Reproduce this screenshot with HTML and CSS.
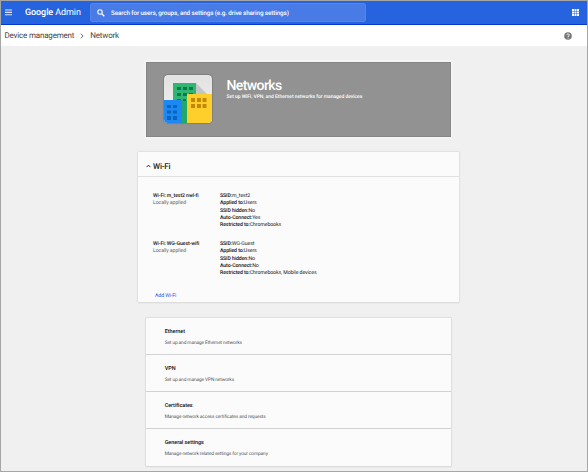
FILE: index.html
```html
<!DOCTYPE html>
<html lang="en">
<head>
<meta charset="utf-8">
<title>Google Admin</title>
<link rel="stylesheet" href="styles.css">
</head>
<body>
<div class="app">
  <header class="topbar">
    <svg class="menu" viewBox="0 0 7 7"><path d="M0 1h7M0 3.4h7M0 5.8h7" stroke="#dfe8fc" stroke-width="1.1"/></svg>
    <div class="brand"><span class="brand-google">Google</span> <span class="brand-admin">Admin</span></div>
    <div class="search">
      <svg class="search-icon" viewBox="0 0 8 8"><circle cx="3" cy="3" r="2.2" fill="none" stroke="#fff" stroke-width="1.1"/><path d="M4.7 4.7L7.3 7.3" stroke="#fff" stroke-width="1.3"/></svg>
      <span class="search-text">Search for users, groups, and settings (e.g. drive sharing settings)</span>
    </div>
    <svg class="apps" viewBox="0 0 7 7"><path fill="#fff" d="M0 0h2v2H0zM2.5 0h2v2h-2zM5 0h2v2H5zM0 2.5h2v2H0zM2.5 2.5h2v2h-2zM5 2.5h2v2H5zM0 5h2v2H0zM2.5 5h2v2h-2zM5 5h2v2H5z"/></svg>
  </header>
  <nav class="crumbs">
    <span class="crumb-parent">Device management</span>
    <svg class="chevron" viewBox="0 0 4 6"><path d="M.8.7L3.1 3 .8 5.3" fill="none" stroke="#555" stroke-width=".9"/></svg>
    <span class="crumb-current">Network</span>
    <svg class="help" viewBox="0 0 8 8"><circle cx="4" cy="4" r="3.8" fill="#777"/><path d="M2.8 3.2C2.8 1.4 5.3 1.5 5.2 3.1C5.2 4 4 4 4 5M4 5.6v.9" fill="none" stroke="#fff" stroke-width=".9"/></svg>
  </nav>
  <main class="content">
    <section class="banner">
      <svg class="logo" viewBox="0 0 48 48">
        <defs>
          <linearGradient id="tile" x1="0" y1="0" x2="0" y2="1"><stop offset="0" stop-color="#e2e2e2"/><stop offset="1" stop-color="#f1f1f1"/></linearGradient>
          <clipPath id="round"><rect width="48" height="48" rx="3.5"/></clipPath>
        </defs>
        <g clip-path="url(#round)">
          <rect width="48" height="48" fill="url(#tile)"/>
          <path d="M32 8L43 19H32z" fill="#c5c5c5"/>
          <rect x="9" y="8" width="23" height="40" fill="#30b573"/>
          <path d="M18 26h5v22h-5z" fill="#27a66a"/>
          <path fill="#087d47" d="M13 12h4v3h-4zM19 12h4v3h-4zM25 12h4v3h-4zM13 18h4v3h-4zM19 18h4v3h-4zM25 18h4v3h-4zM13 24h4v2h-4zM19 24h3v2h-3z"/>
          <rect y="25" width="18" height="23" fill="#1b88f3"/>
          <path fill="#0865ba" d="M3 30h4v3H3zM9 30h4v3H9zM3 35.500h4v3H3zM9 35.500h4v3H9zM3 41h4v4H3zM9 41h4v4H9z"/>
          <rect x="23" y="19" width="25" height="29" fill="#fecf2b"/>
          <path fill="#c28908" d="M27 23h4v4h-4zM33 23h4v4h-4zM38.500 23h4v4h-4zM27 29h4v4h-4zM33 29h4v4h-4zM38.500 29h4v4h-4z"/>
        </g>
      </svg>
      <div class="banner-text">
        <h1>Networks</h1>
        <p>Set up WiFi, VPN, and Ethernet networks for managed devices</p>
      </div>
    </section>

    <section class="wifi">
      <div class="wifi-head">
        <svg class="caret" viewBox="0 0 5 4"><path d="M.6 3.1L2.500 1.200 4.400 3.100" fill="none" stroke="#222" stroke-width="1"/></svg>
        <h2>Wi-Fi</h2>
      </div>
      <div class="wifi-row">
        <div class="wifi-name"><b>Wi-Fi: m_test2 nwl-fi</b><span>Locally applied</span></div>
        <ul class="wifi-info">
          <li><b>SSID:</b>m_test2</li>
          <li><b>Applied to:</b>Users</li>
          <li><b>SSID hidden:</b>No</li>
          <li><b>Auto-Connect:</b>Yes</li>
          <li><b>Restricted to:</b>Chromebooks</li>
        </ul>
      </div>
      <div class="wifi-row">
        <div class="wifi-name"><b>Wi-Fi: WG-Guest-wifi</b><span>Locally applied</span></div>
        <ul class="wifi-info">
          <li><b>SSID:</b>WG-Guest</li>
          <li><b>Applied to:</b>Users</li>
          <li><b>SSID hidden:</b>No</li>
          <li><b>Auto-Connect:</b>No</li>
          <li><b>Restricted to:</b>Chromebooks, Mobile devices</li>
        </ul>
      </div>
      <a class="add">Add Wi-Fi</a>
    </section>

    <section class="list">
      <div class="item"><h3>Ethernet</h3><p>Set up and manage Ethernet networks</p></div>
      <div class="item"><h3>VPN</h3><p>Set up and manage VPN networks</p></div>
      <div class="item"><h3>Certificates</h3><p>Manage network access certificates and requests</p></div>
      <div class="item"><h3>General settings</h3><p>Manage network related settings for your company</p></div>
    </section>
  </main>
</div>
</body>
</html>
```
FILE: styles.css
```css
* { box-sizing: border-box; margin: 0; padding: 0; }
body {
  font-family: Roboto, "Liberation Sans", sans-serif;
  text-rendering: geometricPrecision;
  white-space: nowrap;
  color: #222;
}
svg { display: block; flex: none; }
.app {
  width: 588px;
  height: 472px;
  border: 1px solid #a6a6a6;
  background: #f0f0f0;
  overflow: hidden;
}
.topbar {
  display: flex;
  align-items: center;
  height: 24px;
  padding: 0 8px 0 4px;
  background: #2563df;
  border-bottom: 1px solid #0637cf;
  color: #fff;
}
.menu { width: 7px; height: 7px; }
.brand { width: 78px; padding: 1px 0 0 13px; font-size: 9px; line-height: 12px; letter-spacing: -.08px; }
.brand-google { font-weight: 500; }
.search {
  display: flex;
  align-items: center;
  width: 276px;
  height: 19px;
  padding-left: 6px;
  border: 1px solid #5485e9;
  border-radius: 2px;
  background: #487be6;
}
.search-icon { width: 8px; height: 8px; margin-right: 6px; }
.search-text { font-size: 6.3px; font-weight: 500; letter-spacing: -.11px; }
.apps { width: 7px; height: 7px; margin-left: auto; }
.crumbs {
  display: flex;
  align-items: center;
  height: 21px;
  padding: 0 15px 0 3.5px;
  background: #fff;
  font-size: 8px;
  letter-spacing: -.18px;
  color: #444;
}
.chevron { width: 4px; height: 6px; margin: 1px 6px 0; }
.help { width: 8px; height: 8px; margin-left: auto; }
.content { display: flex; flex-direction: column; align-items: center; padding: 16px 0 0 9px; }
.banner {
  display: flex;
  width: 305px;
  height: 75px;
  padding: 12px 0 0 17px;
  background: #929292;
  border: 1px solid #858585;
  box-shadow: 0 0 2px 1px #f8f8f8;
  color: #fff;
}
.logo { width: 48px; height: 48px; border-radius: 4px; box-shadow: 0 0 1px 1px #808080; }
.banner-text { padding: 3px 0 0 14.5px; }
.banner h1 { font-size: 14px; line-height: 16px; font-weight: 500; letter-spacing: -.6px; }
.banner p { font-size: 5px; line-height: 7px; font-weight: 500; letter-spacing: -.04px; }
.wifi {
  width: 321px;
  height: 150px;
  margin-top: 15px;
  background: #fbfbfb;
  border-radius: 1px;
  box-shadow: 0 0 1px 1px #e0e0e0, 0 1px 1px #bbb;
}
.wifi-head {
  display: flex;
  align-items: center;
  height: 25px;
  padding: 4px 0 0 8px;
  border-bottom: 1px solid #e0e0e0;
}
.caret { width: 5px; height: 4px; margin-right: 2px; }
.wifi-head h2 { font-size: 8px; font-weight: 500; letter-spacing: -.15px; }
.wifi-row { display: flex; height: 48px; padding-left: 15px; font-size: 5.2px; line-height: 7.15px; letter-spacing: -.09px; }
.wifi-head + .wifi-row { margin-top: 16.2px; }
.wifi b { font-weight: 500; color: #111; }
.wifi-name { width: 67px; }
.wifi-name b, .wifi-name span { display: block; }
.wifi-name span { color: #666; }
.wifi-info { list-style: none; }
.add { display: block; padding: 4px 0 0 17px; font-size: 5.2px; line-height: 7px; letter-spacing: -.08px; color: #2159e8; }
.list {
  width: 305px;
  margin-top: 16px;
  background: #fbfbfb;
  border-radius: 1px;
  box-shadow: 0 0 1px 1px #dedede, 0 1px 1px #bbb;
}
.item { height: 37px; padding: 10px 0 0 18.7px; border-bottom: 1px solid #d2d2d2; }
.item:last-child { border-bottom: 0; }
.item h3 { font-size: 5.5px; line-height: 8px; font-weight: 500; letter-spacing: -.06px; color: #111; }
.item p { margin-top: 4px; font-size: 4.8px; line-height: 8px; letter-spacing: -.11px; color: #555; }
```
